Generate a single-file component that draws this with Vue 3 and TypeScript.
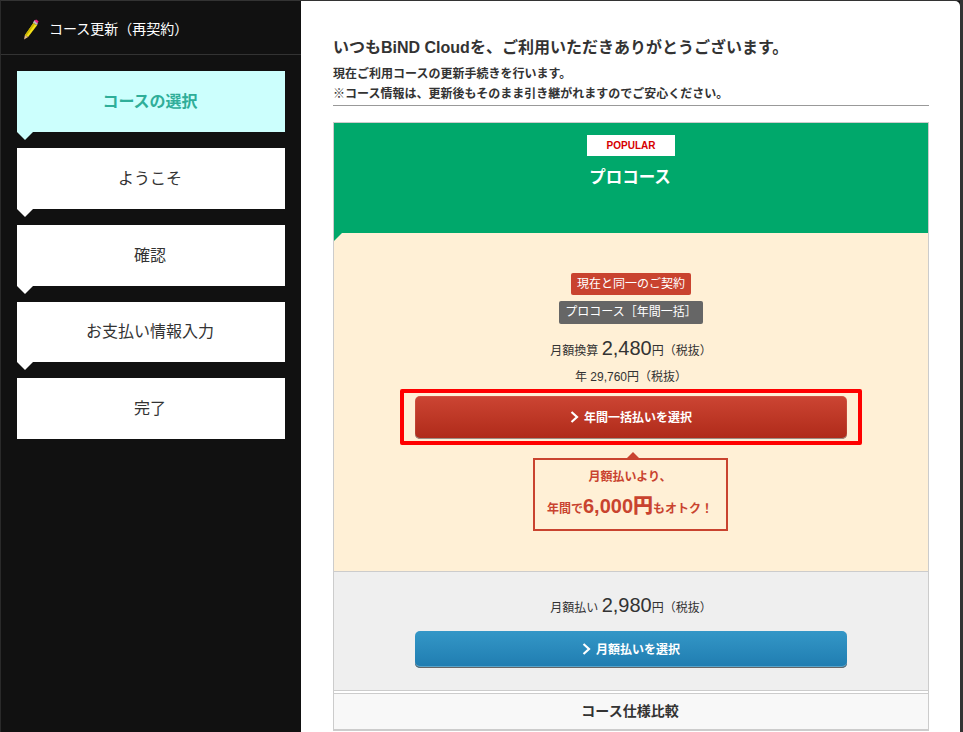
<script setup lang="ts">
const steps = [
  { label: 'コースの選択', active: true, notch: true },
  { label: 'ようこそ', active: false, notch: true },
  { label: '確認', active: false, notch: true },
  { label: 'お支払い情報入力', active: false, notch: true },
  { label: '完了', active: false, notch: false }
]
</script>

<template>
  <div class="page">
    <aside class="side">
      <div class="side__head">
        <svg class="pencil" width="17" height="21" viewBox="0 0 18 22">
          <polygon points="12,4 16,6.5 6.5,19 3,17" fill="#f5e11a" />
          <polygon points="12,4 14,5.2 4.6,18 3,17" fill="#c9b400" />
          <polygon points="3,17 6.5,19 2.2,21.5" fill="#e8b98a" />
          <polygon points="11.5,3.5 13.5,1 17,3.4 16,6.5" fill="#bbb" />
          <polygon points="13,1.6 15,0.4 17.6,2.2 16.4,4.6" fill="#e8237e" />
        </svg>
        <span>コース更新（再契約）</span>
      </div>
      <ul class="steps">
        <li
          v-for="s in steps"
          :key="s.label"
          class="step"
          :class="{ 'step--active': s.active, 'step--notch': s.notch }"
        >{{ s.label }}</li>
      </ul>
    </aside>

    <main class="main">
      <h1 class="main__title">いつもBiND Cloudを、ご利用いただきありがとうございます。</h1>
      <div class="lead">
        <p>現在ご利用コースの更新手続きを行います。</p>
        <p>※コース情報は、更新後もそのまま引き継がれますのでご安心ください。</p>
      </div>

      <section class="plan">
        <header class="plan__head">
          <div class="badge">POPULAR</div>
          <h2 class="plan__name">プロコース</h2>
        </header>

        <div class="yearly">
          <span class="tag tag--red">現在と同一のご契約</span>
          <span class="tag tag--gray">プロコース［年間一括］</span>
          <div class="price price--first">月額換算 <b>2,480</b>円（税抜）</div>
          <div class="price-year">年 29,760円（税抜）</div>
          <div class="highlight">
            <button class="btn btn--red">
              <svg class="chev" width="9" height="12" viewBox="0 0 9 12"><path d="M1.5 1 L7 6 L1.5 11" fill="none" stroke="#fff" stroke-width="2.2" /></svg>
              年間一括払いを選択
            </button>
          </div>
          <div class="callout">
            <p class="callout__a">月額払いより、</p>
            <p class="callout__b">年間で<b>6,000円</b>もオトク！</p>
          </div>
        </div>

        <div class="monthly">
          <div class="price">月額払い <b>2,980</b>円（税抜）</div>
          <button class="btn btn--blue">
            <svg class="chev" width="9" height="12" viewBox="0 0 9 12"><path d="M1.5 1 L7 6 L1.5 11" fill="none" stroke="#fff" stroke-width="2.2" /></svg>
            月額払いを選択
          </button>
        </div>

        <div class="compare">コース仕様比較</div>
      </section>
    </main>
  </div>
</template>

<style>
html, body {
  margin: 0;
  height: 100%;
  overflow: hidden;
  background: #111;
}
</style>

<style scoped>
.page {
  display: flex;
  height: 732px;
  overflow: hidden;
  box-sizing: border-box;
  background: #111;
  border-top: 1px solid #333;
  border-left: 1px solid #2a2a2a;
  border-right: 3px solid #333;
  font-family: "Liberation Sans", "Noto Sans CJK JP", sans-serif;
  color: #333;
}

.side {
  width: 300px;
  flex: none;
  background: #111;
}

.side__head {
  display: flex;
  align-items: center;
  gap: 10px;
  height: 53px;
  padding-left: 21px;
  border-bottom: 1px solid #333;
  color: #fff;
  font-size: 14px;
}

.pencil {
  margin-top: 3px;
}

.steps {
  list-style: none;
  margin: 0;
  padding: 16px 16px 0;
  display: flex;
  flex-direction: column;
  gap: 16px;
}

.step {
  position: relative;
  height: 61px;
  line-height: 61px;
  padding-right: 2px;
  background: #fff;
  text-align: center;
  font-size: 16px;
}

.step:nth-child(4) {
  height: 60px;
  line-height: 59px;
}

.step--active {
  background: #ccfffd;
  color: #2fae99;
  font-weight: 700;
}

.step--notch::after {
  content: "";
  position: absolute;
  left: 0;
  top: 100%;
  border-left: 8px solid transparent;
  border-right: 8px solid transparent;
  border-top: 8px solid #fff;
}

.step--active.step--notch::after {
  border-top-color: #ccfffd;
}

.main {
  flex: 1;
  min-width: 0;
  background: #fff;
  border-top-right-radius: 5px;
  padding: 36px 31px 0 32px;
}

.main__title {
  margin: 0;
  font-size: 16px;
  line-height: 21px;
  font-weight: 700;
  color: #333;
}

.lead {
  margin-top: 6px;
  padding-bottom: 1px;
  border-bottom: 1px solid #999;
  font-size: 12px;
  font-weight: 700;
}

.lead p {
  margin: 0;
  height: 20px;
  line-height: 20px;
}

.plan {
  margin-top: 16px;
  border: 1px solid #ccc;
  text-align: center;
}

.plan__head {
  height: 110px;
  box-sizing: border-box;
  padding-top: 12px;
  background: #00a86b;
  color: #fff;
}

.badge {
  width: 88px;
  height: 21px;
  margin: 0 auto;
  background: #fff;
  color: #d60000;
  font-size: 10px;
  font-weight: 700;
  line-height: 21px;
}

.plan__name {
  margin: 8px 0 0;
  padding-right: 2px;
  font-size: 16.5px;
  line-height: 26px;
  font-weight: 700;
}

.yearly {
  position: relative;
  height: 339px;
  box-sizing: border-box;
  padding-top: 40px;
  background: #fff0d6;
  border-bottom: 1px solid #ccc;
  display: flex;
  flex-direction: column;
  align-items: center;
}

.yearly::before {
  content: "";
  position: absolute;
  left: 0;
  top: 0;
  border-top: 8px solid #00a86b;
  border-right: 8px solid transparent;
}

.tag {
  display: block;
  border-radius: 2px;
  color: #fff;
  font-size: 12px;
  line-height: 22px;
  height: 22px;
  padding: 0 6px;
}

.tag--red {
  background: #c9432f;
}

.tag--gray {
  margin-top: 6px;
  height: 23px;
  line-height: 23px;
  background: #666;
}

.price {
  font-size: 12px;
  line-height: 28px;
  height: 28px;
}

.price--first {
  margin-top: 10px;
}

.price b {
  font-weight: 400;
  font-size: 20px;
}

.price-year {
  margin-top: 5px;
  font-size: 12px;
  line-height: 20px;
}

.highlight {
  margin-top: 2px;
  padding: 3px 11px 2px;
  border: 4px solid #f00;
  border-radius: 2px;
}

.btn {
  display: flex;
  align-items: center;
  justify-content: center;
  gap: 5px;
  width: 432px;
  height: 43px;
  padding: 0 0 2px;
  border: 0;
  border-radius: 5px;
  color: #fff;
  font-family: inherit;
  font-size: 12px;
  font-weight: 700;
}

.btn--red {
  background: linear-gradient(#cc4533, #af2a19);
  box-shadow: inset 0 -1px 0 #9c8f86, inset 0 0 0 1px rgba(255, 255, 255, 0.08);
}

.btn--blue {
  height: 37px;
  margin-top: 12px;
  background: linear-gradient(#3497c7, #1f7cb0);
  box-shadow: inset 0 -1px 0 #666, inset 0 -2px 0 #5aa3c9;
}

.callout {
  position: relative;
  width: 191px;
  height: 69px;
  margin-top: 13px;
  margin-left: -2px;
  border: 2px solid #c9432f;
  color: #c9432f;
  font-size: 12px;
  font-weight: 700;
}

.callout::before {
  content: "";
  position: absolute;
  left: calc(50% + 3px);
  top: -8px;
  margin-left: -6px;
  border-left: 6px solid transparent;
  border-right: 6px solid transparent;
  border-bottom: 6px solid #c9432f;
}

.callout__a,
.callout__b {
  margin: 0;
}

.callout__a {
  margin-top: 2px;
  line-height: 30px;
}

.callout__b {
  margin-top: -4px;
  line-height: 36px;
}

.callout__b b {
  font-size: 20px;
}

.monthly {
  height: 119px;
  box-sizing: border-box;
  padding-top: 19px;
  background: #efefef;
  border-bottom: 1px solid #ccc;
  display: flex;
  flex-direction: column;
  align-items: center;
}

.compare {
  margin-top: 2px;
  padding-right: 2px;
  border-top: 1px solid #ccc;
  border-bottom: 1px solid #ccc;
  height: 35px;
  line-height: 35px;
  background: #f8f8f8;
  font-size: 14px;
  font-weight: 700;
}
</style>
